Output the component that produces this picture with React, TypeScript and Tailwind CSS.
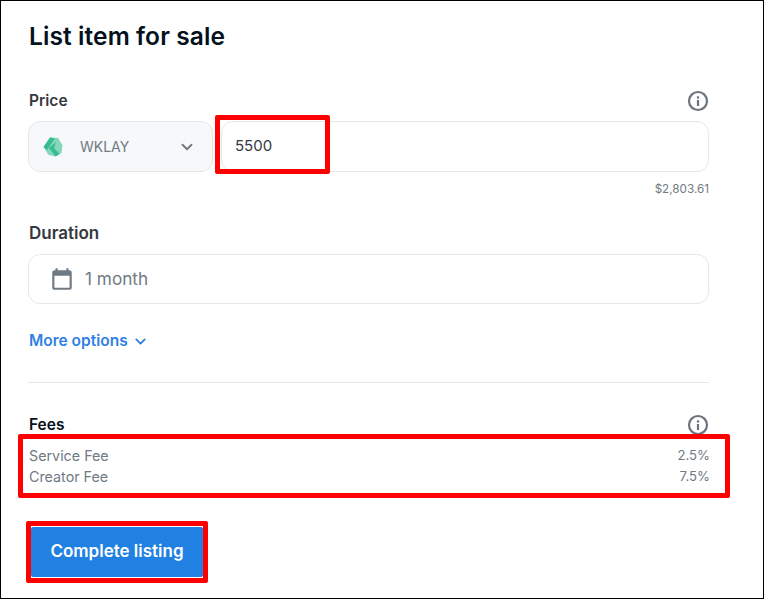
import React from "react";
import { ChevronDown } from "lucide-react";

const font = "font-['Inter','Liberation_Sans',sans-serif]";

const InfoIcon = () => (
  <svg width="22" height="22" viewBox="0 0 22 22" fill="none">
    <circle cx="11" cy="11" r="9" stroke="#6b747c" strokeWidth="2.2" />
    <rect x="9.900" y="10" width="2.200" height="6" fill="#6b747c" />
    <rect x="9.900" y="6.300" width="2.200" height="2.300" fill="#6b747c" />
  </svg>
);

const CalendarIcon = () => (
  <svg width="26" height="26" viewBox="0 0 24 24" fill="#707a83">
    <path d="M19 4h-1V2h-2v2H8V2H6v2H5c-1.100 0-2 .9-2 2v14c0 1.100.9 2 2 2h14c1.100 0 2-.9 2-2V6c0-1.100-.9-2-2-2zm0 16H5V9h14v11z" />
  </svg>
);

const KlayLogo = () => (
  <svg width="20" height="20" viewBox="0 0 20 20">
    <path d="M7 0.500 15 1l4.500 7-1 8-6 3.500-7-1.500L0.500 10z" fill="#86d6bb" />
    <path d="M0.500 10 7 0.500 12 1.500 4 13z" fill="#35bd92" />
    <path d="M6 11 13 5 11 11l5.500 6-4 2.500z" fill="#35bd92" />
  </svg>
);

const Annotation = ({ className }: { className: string }) => (
  <div className={"pointer-events-none absolute rounded-[2px] border-[5px] border-[#ff0000] " + className} />
);

export default function App() {
  return (
    <div className={"relative h-[599px] w-[764px] border border-black bg-white pl-[27px] pr-[54px] " + font}>
      <h1 className="ml-px mt-[19px] text-[24.5px] font-semibold leading-[32px] tracking-[0.1px] text-[#04111d]">
        List item for sale
      </h1>

      <div className="mt-[37px] flex h-[24px] items-center justify-between">
        <span className="ml-px text-[15.5px] font-semibold text-[#353840]">Price</span>
        <InfoIcon />
      </div>
      <div className="mt-[8px] flex gap-[8px]">
        <div className="flex h-[51px] w-[185px] items-center rounded-[12px] border border-[#e5e8eb] bg-[#f6f8fa] pl-[14px] pr-[16px]">
          <KlayLogo />
          <span className="ml-[17px] text-[14px] text-[#707a83]">WKLAY</span>
          <ChevronDown className="ml-auto text-[#707a83]" size={18} strokeWidth={2.5} />
        </div>
        <div className="flex h-[51px] flex-1 items-center rounded-[12px] border border-[#e5e8eb] pl-[13px] text-[15px] text-[#353840]">
          5500
        </div>
      </div>
      <div className="mt-[10px] text-right text-[11.7px] leading-[14px] text-[#707a83]">$2,803.61</div>

      <div className="ml-px mt-[25px] text-[17px] font-semibold leading-[24px] text-[#353840]">Duration</div>
      <div className="mt-[9px] flex h-[50px] items-center rounded-[12px] border border-[#e5e8eb] pl-[20px] text-[17.200px] text-[#707a83]">
        <CalendarIcon />
        <span className="ml-[10px]">1 month</span>
      </div>

      <div className="ml-px mt-[25px] flex h-[24px] items-center gap-[4px] text-[15.500px] font-semibold text-[#2f7fe6]">
        More options
        <ChevronDown size={17} strokeWidth={2.5} />
      </div>

      <div className="mt-[29px] h-px bg-[#e5e8eb]" />

      <div className="mt-[30px] flex h-[24px] items-center justify-between">
        <span className="ml-px text-[15.500px] font-semibold text-[#04111d]">Fees</span>
        <InfoIcon />
      </div>
      <div className="mt-[8px] flex justify-between text-[14.300px] leading-[21px] text-[#707a83]">
        <span className="ml-px">Service Fee</span>
        <span className="-mr-px text-[13.200px]">2.5%</span>
      </div>
      <div className="flex justify-between text-[14.300px] leading-[21px] text-[#707a83]">
        <span className="ml-px">Creator Fee</span>
        <span className="-mr-px text-[13.200px]">7.5%</span>
      </div>

      <button className="ml-[3px] mt-[40px] flex h-[50px] w-[172px] items-center justify-center rounded-[2px] bg-[#2081e2] text-[17px] font-semibold text-white">
        Complete listing
      </button>

      <Annotation className="left-[214px] top-[114px] h-[59px] w-[115px]" />
      <Annotation className="left-[17px] top-[433px] h-[64px] w-[712px]" />
      <Annotation className="left-[25px] top-[520px] h-[62px] w-[182px]" />
    </div>
  );
}
